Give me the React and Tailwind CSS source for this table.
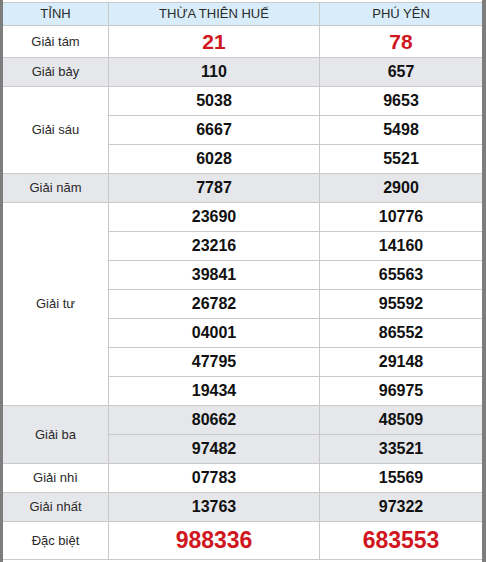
import React from "react";

const groups = [
  { label: "Giải tám", rows: [["21", "78"]], gray: false, last: "h-[31px]", big: "tam" },
  { label: "Giải bảy", rows: [["110", "657"]], gray: true },
  { label: "Giải sáu", rows: [["5038", "9653"], ["6667", "5498"], ["6028", "5521"]], gray: false },
  { label: "Giải năm", rows: [["7787", "2900"]], gray: true },
  {
    label: "Giải tư",
    rows: [
      ["23690", "10776"],
      ["23216", "14160"],
      ["39841", "65563"],
      ["26782", "95592"],
      ["04001", "86552"],
      ["47795", "29148"],
      ["19434", "96975"],
    ],
    gray: false,
  },
  { label: "Giải ba", rows: [["80662", "48509"], ["97482", "33521"]], gray: true },
  { label: "Giải nhì", rows: [["07783", "15569"]], gray: false },
  { label: "Giải nhất", rows: [["13763", "97322"]], gray: true },
  { label: "Đặc biệt", rows: [["988336", "683553"]], gray: false, last: "h-[37px]", big: "db" },
];

function Num({ v, big }) {
  if (big === "tam")
    return <span className="text-[21px] font-bold text-[#d0161e] leading-none">{v}</span>;
  if (big === "db")
    return <span className="text-[23px] font-bold text-[#d0161e] leading-none">{v}</span>;
  return <span className="text-[16px] font-bold text-[#111] leading-none">{v}</span>;
}

export default function App() {
  return (
    <div
      className="w-[486px] h-[562px] bg-white flex"
      style={{ fontFamily: '"Liberation Sans", Arial, sans-serif' }}
    >
      <div className="w-[3px] h-full bg-[#7d7d7d]" />
      <div className="w-[479px] flex flex-col pt-[2px]">
        <div className="flex h-[24px] bg-[#d8edf9] border-t border-b border-[#c9c9c9] text-[13px] text-[#2a2a2a]">
          <div className="w-[106px] flex items-center justify-center border-r border-[#c9c9c9]">TỈNH</div>
          <div className="w-[211px] flex items-center justify-center border-r border-[#c9c9c9]">THỪA THIÊN HUẾ</div>
          <div className="flex-1 flex items-center justify-center">PHÚ YÊN</div>
        </div>
        {groups.map((g, gi) => (
          <div key={gi} className={`flex border-b border-[#c9c9c9] ${g.gray ? "bg-[#e6e7eb]" : "bg-white"}`}>
            <div className="w-[106px] flex items-center justify-center border-r border-[#c9c9c9] text-[13px] text-[#2a2a2a]">
              {g.label}
            </div>
            <div className="flex-1 flex flex-col">
              {g.rows.map((r, ri) => {
                const isLast = ri === g.rows.length - 1;
                const cls = isLast ? (g.last || "h-[28px]") : "h-[29px] border-b border-[#c9c9c9]";
                return (
                  <div key={ri} className={`flex ${cls}`}>
                    <div className="w-[211px] flex items-center justify-center border-r border-[#c9c9c9]">
                      <Num v={r[0]} big={g.big} />
                    </div>
                    <div className="flex-1 flex items-center justify-center">
                      <Num v={r[1]} big={g.big} />
                    </div>
                  </div>
                );
              })}
            </div>
          </div>
        ))}
      </div>
      <div className="w-[4px] h-full bg-[#7d7d7d]" />
    </div>
  );
}
